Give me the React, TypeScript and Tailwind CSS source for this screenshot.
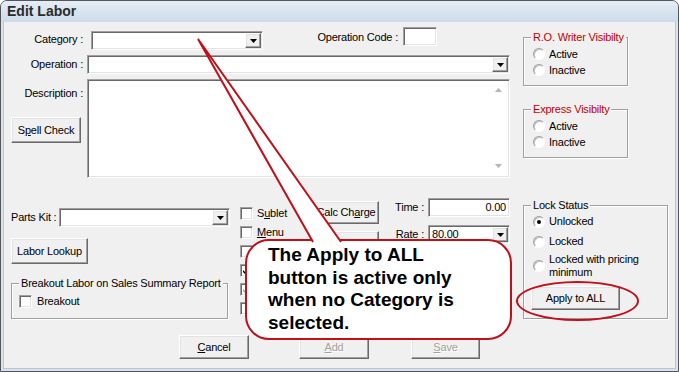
import type { ReactNode } from "react";

const sunken =
  "border border-t-[#a0a0a0] border-l-[#a0a0a0] border-b-white border-r-white shadow-[inset_1px_1px_0_#696969,inset_-1px_-1px_0_#e3e3e3] bg-white";
const raised =
  "border border-t-white border-l-white border-b-[#696969] border-r-[#696969] shadow-[inset_-1px_-1px_0_#a0a0a0,inset_1px_1px_0_#e3e3e3] bg-[#f0f0f0]";

function Arrow({ color = "#000", up = false }: { color?: string; up?: boolean }) {
  return (
    <svg width="7" height="4" viewBox="0 0 7 4" aria-hidden="true">
      <path d={up ? "M0 4h7L3.5 0z" : "M0 0h7L3.5 4z"} fill={color} />
    </svg>
  );
}

function Combo({ className, value }: { className: string; value?: string }) {
  return (
    <div className={`${sunken} ${className} flex h-[19px] items-center p-[1px]`}>
      <span className="flex-1 pl-[2px]">{value}</span>
      <span className={`${raised} flex h-[15px] w-[16px] items-center justify-center`}>
        <Arrow />
      </span>
    </div>
  );
}

function Btn({ className, children, disabled }: { className: string; children?: ReactNode; disabled?: boolean }) {
  return (
    <button
      type="button"
      className={`${raised} ${className} flex items-center justify-center ${
        disabled ? "text-[#a0a0a0] [text-shadow:1px_1px_0_#fff]" : "text-black"
      }`}
    >
      {children}
    </button>
  );
}

function Radio({ checked }: { checked?: boolean }) {
  return (
    <span className="flex h-[12px] w-[12px] shrink-0 items-center justify-center rounded-full border border-t-[#a0a0a0] border-l-[#a0a0a0] border-b-white border-r-white bg-white shadow-[inset_1px_1px_0_#c4c4c4]">
      {checked && <span className="h-[4px] w-[4px] rounded-full bg-black" />}
    </span>
  );
}

function Check({ checked, disabled }: { checked?: boolean; disabled?: boolean }) {
  return (
    <span className={`${sunken} flex h-[13px] w-[13px] shrink-0 items-center justify-center ${disabled ? "bg-[#f0f0f0]" : ""}`}>
      {checked && (
        <svg width="7" height="7" viewBox="0 0 7 7" aria-hidden="true">
          <path d="M0 3l2 2 5-5v2l-5 5-2-2z" fill={disabled ? "#a0a0a0" : "#000"} />
        </svg>
      )}
    </span>
  );
}

function Group({
  title,
  className,
  titleClass = "text-black",
  children,
}: {
  title: string;
  className: string;
  titleClass?: string;
  children: ReactNode;
}) {
  return (
    <div className={`relative border border-[#a0a0a0] shadow-[inset_1px_1px_0_#fff,1px_1px_0_#fff] ${className}`}>
      <span className={`absolute left-[7px] top-[-8px] whitespace-nowrap bg-[#f0f0f0] px-[2px] leading-[14px] ${titleClass}`}>
        {title}
      </span>
      {children}
    </div>
  );
}

export default function App() {
  return (
    <div className="h-[372px] w-[679px] overflow-hidden bg-white font-['Liberation_Sans',Arial,sans-serif] text-[11px] leading-[13px] tracking-[-0.2px] text-black">
      <div className="flex h-full w-full flex-col rounded-t-[7px] border border-[#565656] bg-[#d8e3ef]">
        {/* title bar */}
        <div className="flex h-[21px] shrink-0 items-center rounded-t-[6px] bg-gradient-to-b from-[#e4edf7] to-[#cddbea] pl-[6px] text-[14px] font-bold tracking-normal text-[#2b2b2b]">
          Edit Labor
        </div>

        <div className="flex flex-1 px-[2px] pb-[2px]">
          <div className="relative flex flex-1 border-x border-b border-[#b7c5d4] bg-[#f0f0f0]">
            {/* left side */}
            <div className="flex w-[506px] flex-col">
              <div className="mt-[5px] flex h-[24px] items-start">
                <span className="mt-[6px] w-[79px] text-right">Category :</span>
                <Combo className="ml-[8px] mt-[4px] w-[172px]" />
                <span className="ml-[53px] mt-[4px] w-[82px] whitespace-nowrap text-right">Operation Code :</span>
                <div className={`${sunken} ml-[5px] h-[19px] w-[34px]`} />
              </div>

              <div className="mt-[4px] flex h-[19px] items-center">
                <span className="w-[79px] text-right">Operation :</span>
                <Combo className="ml-[4px] w-[423px]" />
              </div>

              <div className="mt-[5px] flex h-[99px]">
                <div className="flex w-[83px] flex-col">
                  <span className="mt-[8px] w-[79px] text-right">Description :</span>
                  <Btn className="ml-[7px] mt-[17px] h-[26px] w-[70px]">
                    <span>
                      S<u>p</u>ell Check
                    </span>
                  </Btn>
                </div>
                <div className={`${sunken} flex h-[99px] w-[423px] justify-end p-[2px]`}>
                  <div className="flex w-[17px] flex-col items-center justify-between pb-[7px] pt-[6px]">
                    <Arrow color="#b4b4b4" up />
                    <Arrow color="#b4b4b4" />
                  </div>
                </div>
              </div>

              <div className="mt-[18px] flex h-[123px] items-start">
                <div className="flex w-[226px] flex-col">
                  <div className="mt-[12px] flex h-[19px] items-center">
                    <span className="ml-[7px] w-[48px] whitespace-nowrap">Parts Kit :</span>
                    <Combo className="w-[171px]" />
                  </div>
                  <Btn className="ml-[7px] mt-[11px] h-[26px] w-[77px]">Labor Lookup</Btn>
                  <Group title="Breakout Labor on Sales Summary Report" className="ml-[7px] mt-[19px] h-[36px] w-[217px]">
                    <div className="ml-[7px] mt-[11px] flex items-center gap-[5px]">
                      <Check />
                      <span>Breakout</span>
                    </div>
                  </Group>
                </div>

                {/* checkboxes, the lower ones sit under the callout */}
                <div className="ml-[10px] mt-[11px] flex w-[73px] flex-col gap-[6px]">
                  <div className="flex h-[13px] items-center gap-[4px]">
                    <Check />
                    <span>
                      S<u>u</u>blet
                    </span>
                  </div>
                  <div className="flex h-[13px] items-center gap-[4px]">
                    <Check />
                    <span>
                      <u>M</u>enu
                    </span>
                  </div>
                  <div className="flex h-[13px] items-center">
                    <Check />
                  </div>
                  <div className="flex h-[13px] items-center">
                    <Check checked />
                  </div>
                  <div className="flex h-[13px] items-center">
                    <Check checked disabled />
                  </div>
                  <div className="flex h-[13px] items-center">
                    <Check />
                  </div>
                </div>

                <div className="flex w-[66px] flex-col">
                  <Btn className="mt-[5px] h-[23px] w-[66px]">
                    <span>
                      Calc Ch<u>a</u>rge
                    </span>
                  </Btn>
                  <Btn className="mt-[7px] h-[23px] w-[66px]" />
                </div>

                <div className="ml-[16px] flex w-[115px] flex-col">
                  <div className="mt-[2px] flex h-[19px] items-center justify-end gap-[4px]">
                    <span>Time :</span>
                    <div className={`${sunken} flex h-[19px] w-[82px] items-center justify-end pr-[3px]`}>0.00</div>
                  </div>
                  <div className="mt-[8px] flex h-[19px] items-center justify-end gap-[4px]">
                    <span>Rate :</span>
                    <Combo className="w-[82px]" value="80.00" />
                  </div>
                </div>
              </div>

              <div className="mt-[16px] flex h-[24px]">
                <Btn className="ml-[175px] h-[24px] w-[70px]">
                  <span>
                    <u>C</u>ancel
                  </span>
                </Btn>
                <Btn disabled className="ml-[50px] h-[24px] w-[70px]">
                  <span>
                    <u>A</u>dd
                  </span>
                </Btn>
                <Btn disabled className="ml-[42px] h-[24px] w-[69px]">
                  <span>
                    <u>S</u>ave
                  </span>
                </Btn>
              </div>
            </div>

            {/* right side */}
            <div className="ml-[13px] flex flex-col">
              <Group title="R.O. Writer Visibilty" titleClass="text-[#c00000]" className="mt-[15px] h-[49px] w-[105px]">
                <div className="flex flex-col pl-[9px] pt-[8px]">
                  <div className="flex h-[16px] items-center gap-[4px]">
                    <Radio />
                    <span>Active</span>
                  </div>
                  <div className="flex h-[16px] items-center gap-[4px]">
                    <Radio />
                    <span>Inactive</span>
                  </div>
                </div>
              </Group>

              <Group title="Express Visibilty" titleClass="text-[#c00000]" className="mt-[23px] h-[49px] w-[105px]">
                <div className="flex flex-col pl-[9px] pt-[8px]">
                  <div className="flex h-[16px] items-center gap-[4px]">
                    <Radio />
                    <span>Active</span>
                  </div>
                  <div className="flex h-[16px] items-center gap-[4px]">
                    <Radio />
                    <span>Inactive</span>
                  </div>
                </div>
              </Group>

              <Group title="Lock Status" className="mt-[47px] h-[114px] w-[145px]">
                <div className="flex flex-col gap-[3px] pl-[9px] pt-[7px]">
                  <div className="flex h-[17px] items-center gap-[4px]">
                    <Radio checked />
                    <span>Unlocked</span>
                  </div>
                  <div className="flex h-[17px] items-center gap-[4px]">
                    <Radio />
                    <span>Locked</span>
                  </div>
                  <div className="flex h-[26px] items-center gap-[4px]">
                    <Radio />
                    <span className="w-[100px]">Locked with pricing minimum</span>
                  </div>
                </div>
                <Btn className="ml-[7px] mt-[7px] h-[24px] w-[89px]">Apply to ALL</Btn>
              </Group>
            </div>

            {/* callout annotation */}
            <div className="absolute left-[241px] top-[217px] h-[101px] w-[267px] rounded-[24px] border-2 border-[#c0101a] bg-white pl-[21px] pt-[3px] text-[19px] font-bold leading-[22.5px] tracking-normal text-black">
              The Apply to ALL
              <br />
              button is active only
              <br />
              when no Category is
              <br />
              selected.
            </div>
            <svg className="pointer-events-none absolute left-0 top-0" width="671" height="346" aria-hidden="true">
              <path d="M309 220 L194 17 L337 220" fill="#fff" stroke="#c0101a" strokeWidth="2" />
            </svg>
            <div className="pointer-events-none absolute left-[512px] top-[259px] h-[40px] w-[123px] rounded-[50%] border-2 border-[#c0101a]" />
          </div>
        </div>
      </div>
    </div>
  );
}
